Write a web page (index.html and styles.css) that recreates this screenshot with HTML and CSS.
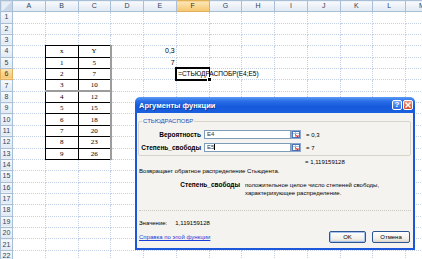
FILE: index.html
```html
<!DOCTYPE html>
<html lang="ru">
<head>
  <meta charset="UTF-8">
  <title>Аргументы функции</title>
  <link rel="stylesheet" href="styles.css">
</head>
<body>

<!-- Worksheet -->
<table class="sheet">
  <colgroup>
    <col class="rh"><col><col><col><col><col><col><col><col><col><col><col><col><col>
  </colgroup>
  <thead>
    <tr><th class="corner"></th><th>A</th><th>B</th><th>C</th><th>D</th><th>E</th><th class="sel">F</th><th>G</th><th>H</th><th>I</th><th>J</th><th>K</th><th>L</th><th>M</th></tr>
  </thead>
  <tbody>
    <tr><th>1</th><td></td><td></td><td></td><td></td><td></td><td></td><td></td><td></td><td></td><td></td><td></td><td></td><td></td></tr>
    <tr><th>2</th><td></td><td></td><td></td><td></td><td></td><td></td><td></td><td></td><td></td><td></td><td></td><td></td><td></td></tr>
    <tr><th>3</th><td></td><td></td><td></td><td></td><td></td><td></td><td></td><td></td><td></td><td></td><td></td><td></td><td></td></tr>
    <tr><th>4</th><td></td><td class="t">x</td><td class="t r">Y</td><td></td><td class="num">0,3</td><td></td><td></td><td></td><td></td><td></td><td></td><td></td><td></td></tr>
    <tr><th>5</th><td></td><td class="t">1</td><td class="t r">5</td><td></td><td class="num">7</td><td></td><td></td><td></td><td></td><td></td><td></td><td></td><td></td></tr>
    <tr><th class="sel">6</th><td></td><td class="t">2</td><td class="t r">7</td><td></td><td></td><td class="edit">=СТЬЮДРАСПОБР(E4;E5)</td><td></td><td></td><td></td><td></td><td></td><td></td><td></td></tr>
    <tr><th>7</th><td></td><td class="t">3</td><td class="t r">10</td><td></td><td></td><td></td><td></td><td></td><td></td><td></td><td></td><td></td><td></td></tr>
    <tr><th>8</th><td></td><td class="t gt">4</td><td class="t r gt">12</td><td></td><td></td><td></td><td></td><td></td><td></td><td></td><td></td><td></td><td></td></tr>
    <tr><th>9</th><td></td><td class="t">5</td><td class="t r">15</td><td></td><td></td><td></td><td></td><td></td><td></td><td></td><td></td><td></td><td></td></tr>
    <tr><th>10</th><td></td><td class="t">6</td><td class="t r">18</td><td></td><td></td><td></td><td></td><td></td><td></td><td></td><td></td><td></td><td></td></tr>
    <tr><th>11</th><td></td><td class="t">7</td><td class="t r">20</td><td></td><td></td><td></td><td></td><td></td><td></td><td></td><td></td><td></td><td></td></tr>
    <tr><th>12</th><td></td><td class="t">8</td><td class="t r">23</td><td></td><td></td><td></td><td></td><td></td><td></td><td></td><td></td><td></td><td></td></tr>
    <tr><th>13</th><td></td><td class="t">9</td><td class="t r">26</td><td></td><td></td><td></td><td></td><td></td><td></td><td></td><td></td><td></td><td></td></tr>
    <tr><th>14</th><td></td><td></td><td></td><td></td><td></td><td></td><td></td><td></td><td></td><td></td><td></td><td></td><td></td></tr>
    <tr><th>15</th><td></td><td></td><td></td><td></td><td></td><td></td><td></td><td></td><td></td><td></td><td></td><td></td><td></td></tr>
    <tr><th>16</th><td></td><td></td><td></td><td></td><td></td><td></td><td></td><td></td><td></td><td></td><td></td><td></td><td></td></tr>
    <tr><th>17</th><td></td><td></td><td></td><td></td><td></td><td></td><td></td><td></td><td></td><td></td><td></td><td></td><td></td></tr>
    <tr><th>18</th><td></td><td></td><td></td><td></td><td></td><td></td><td></td><td></td><td></td><td></td><td></td><td></td><td></td></tr>
    <tr><th>19</th><td></td><td></td><td></td><td></td><td></td><td></td><td></td><td></td><td></td><td></td><td></td><td></td><td></td></tr>
    <tr><th>20</th><td></td><td></td><td></td><td></td><td></td><td></td><td></td><td></td><td></td><td></td><td></td><td></td><td></td></tr>
    <tr><th>21</th><td></td><td></td><td></td><td></td><td></td><td></td><td></td><td></td><td></td><td></td><td></td><td></td><td></td></tr>
    <tr><th>22</th><td></td><td></td><td></td><td></td><td></td><td></td><td></td><td></td><td></td><td></td><td></td><td></td><td></td></tr>
  </tbody>
</table>

<!-- Function arguments dialog -->
<div class="dialog">
  <div class="title">
    <span class="title-text">Аргументы функции</span>
    <div class="title-btns">
      <span class="tbtn help">?</span>
      <span class="tbtn close">
        <svg width="6" height="6" viewBox="0 0 6 6"><path d="M0.5 0.5L5.5 5.5M5.5 0.5L0.5 5.5" stroke="#fff" stroke-width="1.4"/></svg>
      </span>
    </div>
  </div>

  <div class="body">
    <fieldset class="group">
      <legend>СТЬЮДРАСПОБР</legend>
      <div class="args">
        <span class="lbl">Вероятность</span>
        <span class="inp">E4</span>
        <span class="pick">
          <svg width="8" height="7" viewBox="0 0 8 7"><rect x="0.5" y="0.5" width="7" height="6" fill="#fff" stroke="#4a74b8"/><path d="M1 2.5h6M3.5 1v5" stroke="#a9bfe0"/><path d="M3 3.5l3 2.5M6 4v2H4.5" stroke="#d8231b" fill="none"/></svg>
        </span>
        <span class="res">= 0,3</span>

        <span class="lbl">Степень_свободы</span>
        <span class="inp">E5<i class="caret"></i></span>
        <span class="pick">
          <svg width="8" height="7" viewBox="0 0 8 7"><rect x="0.5" y="0.5" width="7" height="6" fill="#fff" stroke="#4a74b8"/><path d="M1 2.5h6M3.5 1v5" stroke="#a9bfe0"/><path d="M3 3.5l3 2.5M6 4v2H4.5" stroke="#d8231b" fill="none"/></svg>
        </span>
        <span class="res">= 7</span>
      </div>
    </fieldset>

    <div class="total">= 1,119159128</div>
    <div class="desc">Возвращает обратное распределение Стьюдента.</div>

    <div class="arg-help">
      <span class="arg-name">Степень_свободы</span>
      <span class="arg-text">положительное целое число степеней свободы,<br>характеризующее распределение.</span>
    </div>

    <div class="sep"></div>

    <div class="value"><span>Значение:</span><span>1,119159128</span></div>

    <div class="footer">
      <a href="#" class="link">Справка по этой функции</a>
      <div class="buttons">
        <button class="ok">OK</button>
        <button>Отмена</button>
      </div>
    </div>
  </div>
</div>

</body>
</html>
```

FILE: styles.css
```css
/* Page */
body {
  margin: 0;
  width: 422px;
  height: 259px;
  overflow: hidden;
  position: relative;
  background: #fff;
  font-family: "Liberation Sans", Arial, sans-serif;
}

/* Worksheet grid */
.sheet {
  border-collapse: collapse;
  table-layout: fixed;
  width: 437.75px;
  font-size: 7px;
  color: #000;
}

.sheet col { width: 32.75px; }
.sheet col.rh { width: 12px; }

.sheet thead tr { height: 11.2px; }
.sheet tbody tr { height: 11.36px; }

.sheet th {
  background: linear-gradient(to bottom, #f8fafd, #e0e8f3);
  border: 1px solid #a9bfd6;
  color: #2e4258;
  font-weight: normal;
  font-size: 7px;
  line-height: 8px;
  padding: 0;
}

.sheet .corner {
  background: linear-gradient(135deg, #e6edf6 50%, #c9d6e8 50%);
}

.sheet th.sel {
  background: linear-gradient(to bottom, #fce6b8, #f5c66c);
  border-color: #e0b05c;
  color: #3b3326;
}

.sheet td {
  border: 1px dotted #c4d0e3;
  padding: 0 1px;
  line-height: 8px;
  white-space: nowrap;
}

/* Data table B4:C13 */
.sheet td.t {
  border: 1px solid #000;
  text-align: center;
  font-family: "Liberation Serif", "Times New Roman", serif;
}

.sheet td.r { border-right: 2px solid #9c9c9c; }
.sheet td.gt { border-top: 2px solid #9c9c9c; }

.sheet td.num { text-align: right; }

/* Cell in edit mode */
.sheet td.edit {
  border: 2px solid #000;
  border-right-width: 1px;
  position: relative;
  overflow: visible;
  font-size: 6.5px;
}

.sheet td.edit::after {
  content: "";
  position: absolute;
  right: -3px;
  bottom: -3px;
  width: 3px;
  height: 3px;
  background: #000;
  border: 1px solid #fff;
}

/* Dialog window */
.dialog {
  position: absolute;
  left: 135px;
  top: 97px;
  width: 280px;
  font-size: 6px;
  color: #000;
}

.title {
  height: 16px;
  display: flex;
  align-items: center;
  justify-content: space-between;
  padding: 0 2px 0 4px;
  border-radius: 5px 5px 0 0;
  background: linear-gradient(to bottom, #5d9bf5 0%, #2a6fe6 25%, #1659dc 60%, #1b60df 100%);
}

.title-text {
  color: #fff;
  font-size: 7.5px;
  font-weight: bold;
  text-shadow: 1px 1px 0 #0b3a9c;
}

.title-btns {
  display: flex;
  gap: 1px;
}

.tbtn {
  width: 8px;
  height: 8px;
  border: 1px solid #fff;
  border-radius: 2px;
  display: flex;
  align-items: center;
  justify-content: center;
  color: #fff;
  font-weight: bold;
  font-size: 8px;
  line-height: 8px;
}

.help { background: linear-gradient(to bottom, #6ea6f8, #2c68df); }
.close { background: linear-gradient(to bottom, #ee9a80, #d44a23); }

.body {
  background: #f4f3f0;
  border: 2px solid #1d57d9;
  border-top: 0;
  padding: 5px 0 5px 0;
}

/* Group box with the arguments */
.group {
  margin: 0 2px 0 1px;
  padding: 5px 0 3px 1px;
  border: 1px solid #d6d5c8;
  border-radius: 2px;
}

.group legend {
  color: #2550b8;
  font-size: 6px;
  line-height: 7px;
  padding: 0 1px;
  margin-left: 2px;
}

.args {
  display: grid;
  grid-template-columns: 64px 87px 10px 1fr;
  row-gap: 4px;
  align-items: center;
}

.lbl {
  font-weight: bold;
  font-size: 6.5px;
  text-align: right;
  padding-right: 3px;
}

.inp {
  height: 7px;
  line-height: 7px;
  background: #fff;
  border: 1px solid #7f9db9;
  padding-left: 2px;
  color: #333;
}

.caret {
  display: inline-block;
  width: 1px;
  height: 6px;
  background: #000;
  vertical-align: middle;
}

.pick {
  height: 9px;
  display: flex;
  align-items: center;
  justify-content: center;
  background: linear-gradient(to bottom, #f4f7fd, #d6e2f5);
  border: 1px solid #8da6cf;
  box-sizing: border-box;
}

.res { padding-left: 5px; }

.total {
  margin-top: 3px;
  padding-left: 168px;
  line-height: 7px;
}

.desc {
  margin-top: 2px;
  padding-left: 2px;
  line-height: 7px;
}

/* Help for the current argument */
.arg-help {
  margin-top: 6px;
  display: grid;
  grid-template-columns: 103px 1fr;
  line-height: 8px;
}

.arg-name {
  font-weight: bold;
  font-size: 6.5px;
  text-align: right;
}

.arg-text { padding-left: 5px; }

.sep {
  margin: 13px 2px 0 2px;
  border-top: 1px dotted #c9c8bd;
}

.value {
  margin-top: 9px;
  padding-left: 2px;
  line-height: 7px;
  display: flex;
  gap: 8px;
}

.footer {
  margin-top: 4px;
  padding: 0 3px 0 2px;
  display: flex;
  align-items: center;
  justify-content: space-between;
}

.link {
  color: #1a3fd8;
  text-decoration: underline;
}

.buttons {
  display: flex;
  gap: 6px;
}

.buttons button {
  width: 38px;
  height: 12px;
  padding: 0;
  font-family: "Liberation Sans", Arial, sans-serif;
  font-size: 6px;
  color: #000;
  border: 1px solid #2c5592;
  border-radius: 2px;
  background: linear-gradient(to bottom, #ffffff, #f0efe8 70%, #d8d6cb);
}

.buttons button.ok {
  width: 37px;
  box-shadow: inset 0 0 0 1px #a9c3f0;
}
```
